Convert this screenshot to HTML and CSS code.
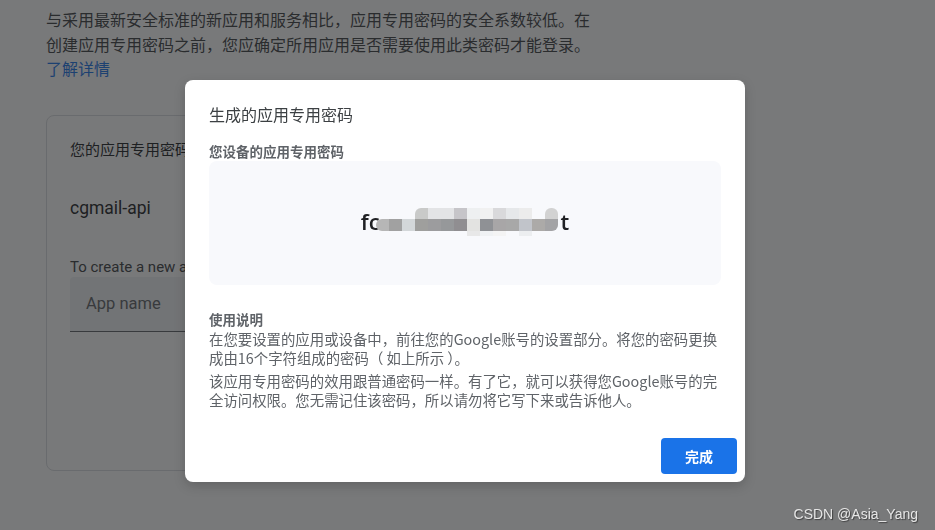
FILE: index.html
```html
<!DOCTYPE html>
<html lang="zh-CN">
<head>
<meta charset="utf-8">
<title>生成的应用专用密码</title>
<link rel="stylesheet" href="styles.css">
</head>
<body>
<main class="page">
  <p class="intro">与采用最新安全标准的新应用和服务相比，应用专用密码的安全系数较低。在<br>创建应用专用密码之前，您应确定所用应用是否需要使用此类密码才能登录。<br><a class="link" href="#">了解详情</a></p>
  <section class="card">
    <h2 class="card-title">您的应用专用密码</h2>
    <div class="app-item">cgmail-api</div>
    <div class="create-label">To create a new app specific password, type a name for it below...</div>
    <div class="field"><span class="placeholder">App name</span></div>
  </section>
</main>

<div class="overlay"></div>

<div class="dialog" role="dialog">
  <div class="dialog-body">
    <h1 class="dialog-title">生成的应用专用密码</h1>
    <div class="label">您设备的应用专用密码</div>
    <div class="pw-box">
      <div class="pw">
        <span class="pw-text">fc</span>
        <span class="mosaic">
          <span class="mrow r1"><i></i><i></i><i></i><i></i><i></i><i></i><i></i><i></i><i></i><i></i><i></i><i></i><i></i><i></i></span>
          <span class="mrow r2"><i></i><i></i><i></i><i></i><i></i><i></i><i></i><i></i><i></i><i></i><i></i><i></i><i></i><i></i></span>
          <span class="mrow r3"><i></i><i></i><i></i><i></i><i></i><i></i><i></i><i></i><i></i><i></i><i></i><i></i><i></i><i></i></span>
        </span>
        <span class="pw-text">t</span>
      </div>
    </div>
    <div class="usage">
      <div class="label-2">使用说明</div>
      <p class="para">在您要设置的应用或设备中，前往您的Google账号的设置部分。将您的密码更换成由16个字符组成的密码（ 如上所示 ）。</p>
      <p class="para">该应用专用密码的效用跟普通密码一样。有了它，就可以获得您Google账号的完全访问权限。您无需记住该密码，所以请勿将它写下来或告诉他人。</p>
    </div>
  </div>
  <div class="dialog-footer">
    <button class="done">完成</button>
  </div>
</div>

<div class="watermark">CSDN @Asia_Yang</div>
</body>
</html>
```

FILE: styles.css
```css
* { box-sizing: border-box; }
html, body { margin: 0; padding: 0; }
body {
  width: 935px;
  height: 530px;
  overflow: hidden;
  background: #ffffff;
  font-family: Roboto, "Noto Sans CJK SC", sans-serif;
  color: #3c4043;
}
.page {
  padding: 7px 0 0 46px;
}
.intro {
  margin: 0;
  font-size: 16px;
  line-height: 24.5px;
  color: #3c4043;
  font-family: "Noto Sans CJK SC", sans-serif;
}
.link { color: #1a73e8; text-decoration: none; }
.card {
  margin-top: 34px;
  width: 560px;
  height: 356px;
  border: 1px solid #dadce0;
  border-radius: 8px;
  padding: 23px 23px 0;
}
.card-title {
  margin: 0;
  font-size: 15px;
  font-weight: normal;
  line-height: 20px;
  color: #202124;
  font-family: "Noto Sans CJK SC", sans-serif;
}
.app-item {
  margin-top: 36px;
  font-size: 17.5px;
  line-height: 26px;
  color: #202124;
}
.create-label {
  margin-top: 36px;
  font-size: 15px;
  line-height: 20px;
  color: #3c4043;
  white-space: nowrap;
}
.field {
  height: 55px;
  background: #f1f3f4;
  border-bottom: 1px solid #5f6368;
  border-radius: 4px 4px 0 0;
  display: flex;
  align-items: center;
  padding-left: 16px;
}
.placeholder { font-size: 16.5px; color: #5f6368; }

.overlay {
  position: fixed;
  inset: 0;
  background: rgba(30, 31, 34, 0.6);
}

.dialog {
  position: fixed;
  left: 185px;
  top: 80px;
  width: 560px;
  height: 402px;
  background: #ffffff;
  border-radius: 8px;
  box-shadow: 0 4px 12px rgba(0, 0, 0, 0.18);
  display: flex;
  flex-direction: column;
  font-family: "Noto Sans CJK SC", sans-serif;
}
.dialog-body {
  padding: 22px 24px 0;
}
.dialog-title {
  margin: 0;
  font-size: 16px;
  font-weight: normal;
  line-height: 24px;
  color: #3c4043;
}
.label {
  margin-top: 15px;
  font-size: 13.5px;
  font-weight: bold;
  line-height: 20px;
  color: #5f6368;
}
.pw-box {
  height: 124px;
  background: #f8f9fc;
  border-radius: 8px;
  display: flex;
  align-items: center;
  justify-content: center;
}
.pw {
  display: flex;
  align-items: center;
  margin-top: -5px;
  font-family: "Open Sans", Roboto, sans-serif;
  font-size: 22px;
  font-weight: 600;
  color: #202124;
  line-height: 28px;
}
.mosaic {
  display: flex;
  flex-direction: column;
  margin-left: -4px;
  margin-right: 3px;
  padding-top: 3px;
}
.mrow { display: flex; }
.mrow i { display: block; width: 13px; }
.r1 i { height: 11px; }
.r2 i { height: 12px; }
.r3 i { height: 5px; }

.r1 i:nth-child(4) { background: #c9cac9; border-top-left-radius: 6px; }
.r1 i:nth-child(5) { background: #e3e4e6; }
.r1 i:nth-child(6) { background: #e3e4e6; }
.r1 i:nth-child(7) { background: #c6c5c9; }
.r1 i:nth-child(8) { background: #eef0f1; }
.r1 i:nth-child(9) { background: #f1f1f1; }
.r1 i:nth-child(10) { background: #d9d9db; }
.r1 i:nth-child(11) { background: #e6e8ea; }
.r1 i:nth-child(12) { background: #ececec; }
.r1 i:nth-child(14) { background: #d2d2d2; border-radius: 6px 6px 0 0; }

.r2 i:nth-child(1) { background: #b6b6b6; border-radius: 6px 0 0 6px; }
.r2 i:nth-child(2) { background: #a1a1a1; }
.r2 i:nth-child(3) { background: #d3d7d9; }
.r2 i:nth-child(4) { background: #9f9f9d; }
.r2 i:nth-child(5) { background: #9c9c9e; }
.r2 i:nth-child(6) { background: #96989a; }
.r2 i:nth-child(7) { background: #908e91; }
.r2 i:nth-child(8) { background: #e3e3e1; }
.r2 i:nth-child(9) { background: #8f9195; }
.r2 i:nth-child(10) { background: #a8a6a7; }
.r2 i:nth-child(11) { background: #a8a8a8; }
.r2 i:nth-child(12) { background: #c1c4ca; }
.r2 i:nth-child(13) { background: #acaaa8; }
.r2 i:nth-child(14) { background: #a3a3a5; border-radius: 0 0 6px 0; }

.r3 i:nth-child(8) { background: #e8e8e8; }
.r3 i:nth-child(9) { background: #f0f2f4; }
.r3 i:nth-child(10) { background: #f4f4f4; }
.r3 i:nth-child(12) { background: #eceef0; }

.usage {
  margin-top: 25px;
  font-size: 14.4px;
  line-height: 19px;
  color: #5f6368;
}
.label-2 {
  font-weight: bold;
  font-size: 13.5px;
}
.para { margin: 0 0 4px; }

.dialog-footer {
  margin-top: auto;
  padding: 8px;
  display: flex;
  justify-content: flex-end;
}
.done {
  width: 76px;
  height: 36px;
  border: none;
  border-radius: 4px;
  background: #1a73e8;
  color: #ffffff;
  font-family: "Noto Sans CJK SC", sans-serif;
  font-size: 14px;
  font-weight: bold;
  padding: 0;
}

.watermark {
  position: fixed;
  right: 17px;
  bottom: 8px;
  font-family: "Liberation Sans", Arial, sans-serif;
  font-size: 14px;
  line-height: 16px;
  color: #e6e6e6;
  text-shadow: 1px 1px 1px rgba(40, 40, 40, 0.7);
}
```
